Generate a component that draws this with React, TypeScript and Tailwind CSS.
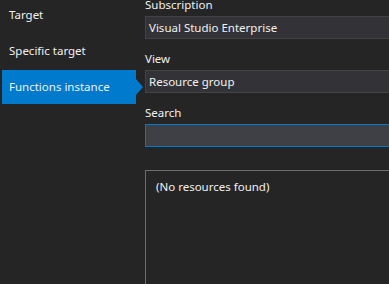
import React from "react";

const NAV = ["Target", "Specific target", "Functions instance"];
const ACTIVE = 2;

function Field({ label, value, focused }: { label: string; value?: string; focused?: boolean }) {
  return (
    <div className="flex flex-col shrink-0">
      <div className="h-4 leading-4 text-[11.5px] text-[#f1f1f1]">{label}</div>
      <div
        className={`mt-[3px] h-[23px] flex items-center pl-[3px] border text-[11.5px] text-[#f1f1f1] ${
          focused ? "bg-[#3f3f46] border-[#007acc]" : "bg-[#333337] border-[#434346]"
        }`}
      >
        {value}
      </div>
    </div>
  );
}

export default function App() {
  return (
    <div
      className="w-[389px] h-[284px] overflow-hidden bg-[#252526] flex"
      style={{ fontFamily: '"Noto Sans", "Open Sans", sans-serif' }}
    >
      <nav className="w-[145px] shrink-0 flex flex-col gap-[2px] mt-[-2px] pl-[2px]">
        {NAV.map((item, i) => (
          <div
            key={item}
            className={`relative h-[34px] w-[134px] flex items-center pl-[7px] text-[11.5px] text-[#f1f1f1] ${
              i === ACTIVE ? "bg-[#007acc]" : ""
            }`}
          >
            {item}
            {i === ACTIVE && (
              <span className="absolute left-full top-1/2 -translate-y-1/2 w-0 h-0 border-y-[8px] border-y-transparent border-l-[7px] border-l-[#007acc]" />
            )}
          </div>
        ))}
      </nav>
      <div className="w-[260px] shrink-0 flex flex-col mt-[-3px]">
        <Field label="Subscription" value="Visual Studio Enterprise" />
        <div className="h-3 shrink-0" />
        <Field label="View" value="Resource group" />
        <div className="h-3 shrink-0" />
        <Field label="Search" focused />
        <div className="mt-[23px] flex-1 border border-b-0 border-[#6d6d72] pl-[10px] pt-[7px] text-[11.5px] text-[#f1f1f1]">
          (No resources found)
        </div>
      </div>
    </div>
  );
}
